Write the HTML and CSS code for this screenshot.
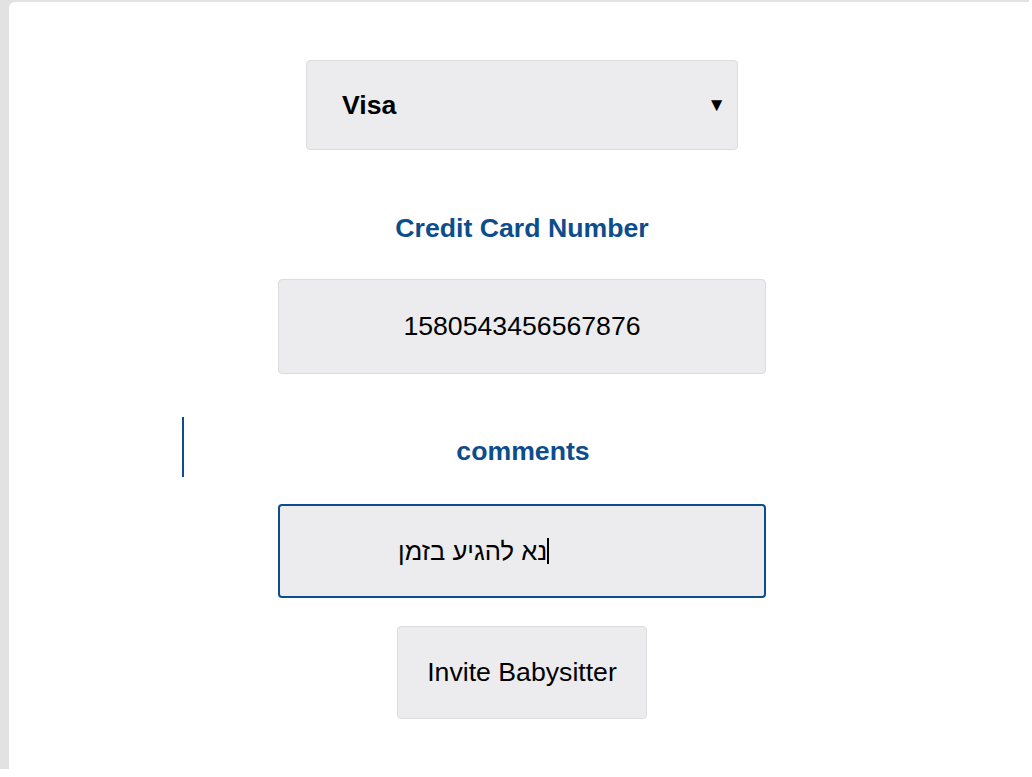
FILE: index.html
```html
<!DOCTYPE html>
<html lang="en">
<head>
<meta charset="utf-8">
<title>Invite Babysitter</title>
<link rel="stylesheet" href="styles.css">
</head>
<body>
<div class="frame">
  <div class="card">
    <div class="form">
      <div class="select">
        <span class="select-value">Visa</span>
        <span class="select-arrow">▼</span>
      </div>
      <div class="label label-card">Credit Card Number</div>
      <div class="field">1580543456567876</div>
      <div class="label-row">comments</div>
      <div class="field field-focus"><span class="rtl" dir="rtl">נא להגיע בזמן</span><span class="caret"></span></div>
      <div class="button">Invite Babysitter</div>
    </div>
  </div>
</div>
</body>
</html>
```
FILE: styles.css
```css
* { box-sizing: border-box; }
html, body { margin: 0; padding: 0; background: #ffffff; }
body { font-family: "Liberation Sans", Arial, sans-serif; color: #000; }
.frame {
  width: 1029px;
  height: 769px;
  background: #e2e2e2;
  padding: 2px 0 0 9px;
}
.card {
  background: #fff;
  height: 100%;
  border-top-left-radius: 6px;
  padding: 58px 0 0 6px;
}
.form {
  display: flex;
  flex-direction: column;
  align-items: center;
}
.select {
  width: 432px;
  height: 90px;
  background: #ececee;
  border: 1px solid #dcdcdc;
  border-radius: 4px;
  display: flex;
  align-items: center;
  justify-content: space-between;
  padding: 0 11px 0 35px;
}
.select-value { font-size: 26.67px; font-weight: bold; }
.select-arrow { font-size: 19px; }
.label {
  color: #0d4d8c;
  font-weight: bold;
  font-size: 26.67px;
  line-height: 30px;
}
.label-card { margin-top: 63px; }
.field {
  width: 488px;
  height: 95px;
  margin-top: 36px;
  background: #ececee;
  border: 1px solid #dcdcdc;
  border-radius: 4px;
  display: flex;
  align-items: center;
  justify-content: center;
  font-size: 26.67px;
}
.label-row {
  width: 680px;
  height: 60px;
  margin-top: 43px;
  border-left: 2px solid #0d4d8c;
  color: #0d4d8c;
  font-weight: bold;
  font-size: 26.67px;
  text-align: center;
  padding-top: 19px;
  line-height: 30px;
}
.field-focus {
  height: 94px;
  margin-top: 27px;
  border: 2px solid #0d4d8c;
  justify-content: flex-start;
  padding-left: 118px;
}
.rtl { direction: rtl; font-family: "Liberation Sans", "DejaVu Sans", sans-serif; font-size: 25.6px; }
.caret {
  width: 2px;
  height: 26px;
  background: #000;
}
.button {
  width: 250px;
  height: 93px;
  margin-top: 28px;
  background: #ececee;
  border: 1px solid #dcdcdc;
  border-radius: 4px;
  display: flex;
  align-items: center;
  justify-content: center;
  font-size: 26.67px;
}
```
